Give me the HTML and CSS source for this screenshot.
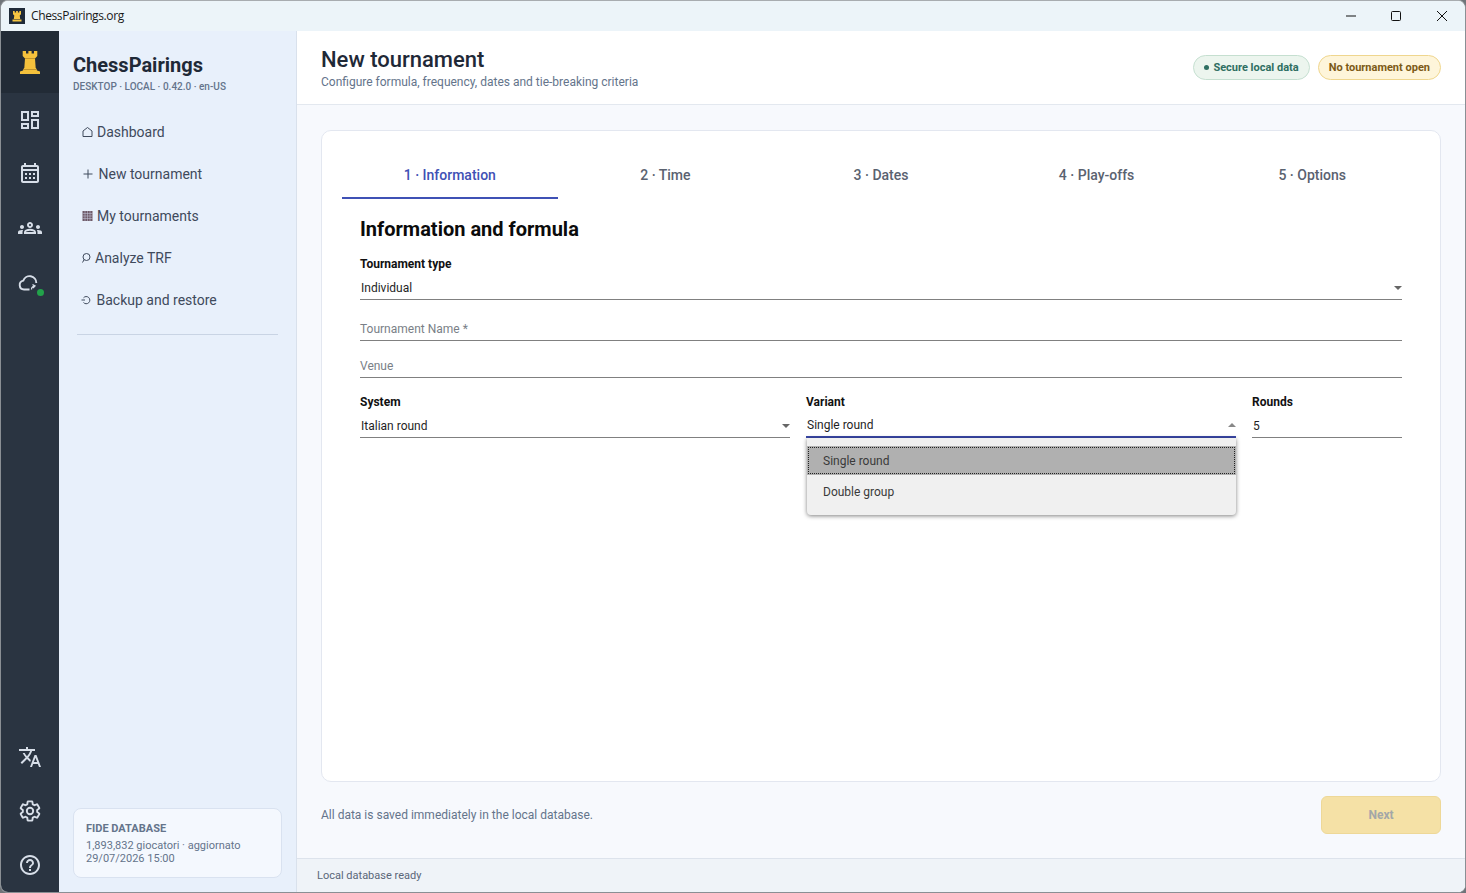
FILE: index.html
```html
<!DOCTYPE html>
<html lang="en">
<head>
<meta charset="utf-8">
<title>ChessPairings.org</title>
<link rel="stylesheet" href="styles.css">
</head>
<body>
<div class="window">
  <header class="titlebar">
    <span class="app-icon"><svg width="16" height="16" viewBox="0 0 16 16"><rect width="16" height="16" fill="#1f2a38"/><path d="M4 3h1.700v1.500h1.400V3h1.800v1.500h1.400V3H12v3.200l-1.300 1.200.5 3.600H4.800l.5-3.600L4 6.200z" fill="#f5c542"/><rect x="3.500" y="11.500" width="9" height="2" fill="#f5c542"/></svg></span>
    <span class="app-name">ChessPairings.org</span>
    <div class="win-controls">
      <svg width="12" height="12" viewBox="0 0 12 12"><path d="M1 6h10" stroke="#111" stroke-width="1" fill="none"/></svg>
      <svg width="12" height="12" viewBox="0 0 12 12"><rect x="1.500" y="1.500" width="9" height="9" rx="1" stroke="#111" stroke-width="1" fill="none"/></svg>
      <svg width="12" height="12" viewBox="0 0 12 12"><path d="M1 1l10 10M11 1L1 11" stroke="#111" stroke-width="1" fill="none"/></svg>
    </div>
  </header>
  <div class="app">
    <nav class="rail">
      <div class="rail-logo">
        <svg width="20" height="23" viewBox="0 0 20 23"><path d="M2.700 0h3.300v2.600h2.400V0h3.200v2.600h2.400V0h3.300v5L15 7.500l.7 9.500H4.300L5 7.500 2.700 5z" fill="#f5c13c"/><path d="M5 7.500h10" stroke="#c2952c" stroke-width="1"/><path d="M4 17h12l1 2.500 3 1V23H0v-2.500l3-1z" fill="#f5c13c"/><path d="M3.500 18.500h13" stroke="#c2952c" stroke-width="1"/></svg>
      </div>
      <div class="rail-top">
        <a class="rail-btn"><svg width="24" height="24" viewBox="0 0 24 24" class="ri"><path d="M19 5v2h-4V5h4M9 5v6H5V5h4m10 8v6h-4v-6h4M9 17v2H5v-2h4M21 3h-8v6h8V3zM11 3H3v10h8V3zm10 8h-8v10h8V11zm-10 4H3v6h8v-6z"/></svg></a>
        <a class="rail-btn"><svg width="24" height="24" viewBox="0 1 24 24" class="ri"><path d="M19 4h-1V2h-2v2H8V2H6v2H5C3.900 4 3 4.900 3 6v14c0 1.100.9 2 2 2h14c1.100 0 2-.9 2-2V6c0-1.100-.9-2-2-2zm0 16H5V10h14V20zM5 8V6h14v2H5z"/><path d="M7 12h2v2H7zM11 12h2v2h-2zM15 12h2v2h-2zM7 16h2v2H7zM11 16h2v2h-2zM15 16h2v2h-2z"/></svg></a>
        <a class="rail-btn"><svg width="24" height="24" viewBox="0 0 24 24" class="ri"><path d="M4 13c1.100 0 2-.9 2-2 0-1.100-.9-2-2-2s-2 .9-2 2c0 1.100.9 2 2 2zm1.130 1.100C4.760 14.040 4.390 14 4 14c-.99 0-1.930.21-2.780.58C.48 14.900 0 15.620 0 16.430V18h4.500v-1.610c0-.83.23-1.610.63-2.290zM20 13c1.100 0 2-.9 2-2 0-1.100-.9-2-2-2s-2 .9-2 2c0 1.100.9 2 2 2zm4 3.430c0-.81-.48-1.530-1.220-1.850C21.930 14.210 20.990 14 20 14c-.39 0-.76.04-1.130.1.400.68.630 1.460.630 2.290V18H24v-1.570zm-7.760-2.780C15.070 13.140 13.630 12.750 12 12.750c-1.630 0-3.070.39-4.240.9C6.680 14.130 6 15.210 6 16.390V18h12v-1.610c0-1.180-.68-2.260-1.760-2.740zM8.070 16c.09-.23.13-.39.91-.69.97-.38 1.990-.56 3.020-.56s2.050.18 3.020.56c.77.3.81.46.91.69H8.070zM12 8c.55 0 1 .45 1 1s-.45 1-1 1-1-.45-1-1 .45-1 1-1m0-2c-1.660 0-3 1.340-3 3s1.340 3 3 3 3-1.340 3-3-1.340-3-3-3z"/></svg></a>
        <a class="rail-btn"><svg width="24" height="24" viewBox="0 -2 24 24" class="rs"><path d="M11.500 17.500H6a4.500 4.500 0 0 1-.7-8.900A6.700 6.700 0 0 1 18.300 11"/><path d="M13.500 17.500a3.500 3.500 0 0 1 3.500-3.500M14.500 12.500l2.500 1.500-2 2" stroke-width="1.300"/></svg><span class="status-dot"></span></a>
      </div>
      <div class="rail-bottom">
        <a class="rail-btn"><svg width="24" height="24" viewBox="0 0 24 24" class="ri"><path d="M12.870 15.070l-2.540-2.510.03-.03c1.740-1.940 2.980-4.170 3.710-6.530H17V4h-7V2H8v2H1v1.990h11.170C11.500 7.920 10.440 9.750 9 11.350 8.070 10.320 7.300 9.190 6.690 8h-2c.73 1.630 1.730 3.170 2.980 4.560l-5.090 5.020L4 19l5-5 3.110 3.110.76-2.040zM18.500 10h-2L12 22h2l1.120-3h4.750L21 22h2l-4.500-12zm-2.620 7l1.620-4.330L19.120 17h-3.240z"/></svg></a>
        <a class="rail-btn"><svg width="24" height="24" viewBox="0 0 24 24" class="rs"><path d="M19.140 12.940c.04-.3.06-.61.06-.94 0-.32-.02-.64-.07-.94l2.030-1.580c.18-.14.23-.41.12-.61l-1.920-3.320c-.12-.22-.37-.29-.59-.22l-2.390.96c-.5-.38-1.030-.7-1.620-.94l-.36-2.540c-.04-.24-.24-.41-.48-.41h-3.840c-.24 0-.43.17-.47.41l-.36 2.540c-.59.24-1.130.57-1.620.94l-2.390-.96c-.22-.08-.47 0-.59.22L2.740 8.870c-.12.21-.08.47.12.61l2.030 1.580c-.05.3-.09.63-.09.94s.02.64.07.94l-2.030 1.580c-.18.14-.23.41-.12.61l1.920 3.320c.12.22.37.29.59.22l2.390-.96c.5.38 1.030.7 1.620.94l.36 2.540c.05.24.24.41.48.41h3.840c.24 0 .44-.17.47-.41l.36-2.540c.59-.24 1.130-.56 1.620-.94l2.390.96c.22.08.47 0 .59-.22l1.920-3.320c.12-.22.07-.47-.12-.61l-2.010-1.580z"/><circle cx="12" cy="12" r="3.200"/></svg></a>
        <a class="rail-btn"><svg width="24" height="24" viewBox="0 0 24 24" class="ri"><path d="M11 18h2v-2h-2v2zm1-16C6.480 2 2 6.480 2 12s4.480 10 10 10 10-4.480 10-10S17.520 2 12 2zm0 18c-4.410 0-8-3.590-8-8s3.590-8 8-8 8 3.590 8 8-3.590 8-8 8zm0-14c-2.210 0-4 1.790-4 4h2c0-1.100.9-2 2-2s2 .9 2 2c0 2-3 1.750-3 5h2c0-2.250 3-2.500 3-5 0-2.210-1.790-4-4-4z"/></svg></a>
      </div>
    </nav>
    <aside class="sidebar">
      <div class="brand">
        <div class="brand-name">ChessPairings</div>
        <div class="brand-meta">DESKTOP · LOCAL · 0.42.0 · en-US</div>
      </div>
      <ul class="menu">
        <li><svg class="mi" width="11" height="12" viewBox="0 0 11 12"><path d="M1 10.500V5l4.500-3.500L10 5v5.500z" fill="none" stroke="#3f4a5c"/></svg>Dashboard</li>
        <li class="menu-new"><svg class="mi" width="10" height="12" viewBox="0 0 10 12"><path d="M5 1.500v9M.5 6h9" fill="none" stroke="#3f4a5c"/></svg>New tournament</li>
        <li><svg class="mi" width="11" height="12" viewBox="0 0 11 12"><rect x=".5" y="1" width="10" height="10" fill="#6e5a68"/><path d="M.5 3.500h10M.5 6h10M.5 8.500h10M3 1v10M5.500 1v10M8 1v10" stroke="#c9cde0" stroke-width=".5"/></svg>My tournaments</li>
        <li class="menu-tight"><svg class="mi" width="10" height="12" viewBox="0 0 10 12"><circle cx="5.500" cy="5" r="3.500" fill="none" stroke="#3f4a5c"/><path d="M3.200 7.500L1.500 10.500" stroke="#3f4a5c" fill="none"/></svg>Analyze TRF</li>
        <li class="menu-backup"><svg class="mi" width="11" height="12" viewBox="0 0 11 12"><path d="M2.500 3.800a3.600 3.600 0 1 1 0 4.700M.5 6h3.500" fill="none" stroke="#3f4a5c"/></svg>Backup and restore</li>
      </ul>
      <div class="menu-rule"></div>
      <div class="fide">
        <div class="fide-title">FIDE DATABASE</div>
        <div class="fide-text">1,893,832 giocatori · aggiornato<br>29/07/2026 15:00</div>
      </div>
    </aside>
    <main class="content">
      <div class="page-head">
        <div>
          <h1>New tournament</h1>
          <p>Configure formula, frequency, dates and tie-breaking criteria</p>
        </div>
        <div class="badges">
          <span class="badge badge-green"><i></i>Secure local data</span>
          <span class="badge badge-yellow">No tournament open</span>
        </div>
      </div>
      <div class="page-body">
        <section class="card">
          <div class="tabs">
            <div class="tab active">1 · Information</div>
            <div class="tab">2 · Time</div>
            <div class="tab">3 · Dates</div>
            <div class="tab">4 · Play-offs</div>
            <div class="tab">5 · Options</div>
          </div>
          <div class="form">
            <h2>Information and formula</h2>
            <div class="field">
              <label>Tournament type</label>
              <div class="control select"><span>Individual</span><b class="caret"></b></div>
            </div>
            <div class="plain">Tournament Name *</div>
            <div class="plain">Venue</div>
            <div class="row">
              <div class="field f-system">
                <label>System</label>
                <div class="control select"><span>Italian round</span><b class="caret"></b></div>
              </div>
              <div class="field f-variant">
                <label>Variant</label>
                <div class="control select open"><span>Single round</span><b class="caret up"></b></div>
                <div class="dropdown">
                  <div class="opt selected">Single round</div>
                  <div class="opt">Double group</div>
                </div>
              </div>
              <div class="field f-rounds">
                <label>Rounds</label>
                <div class="control"><span>5</span></div>
              </div>
            </div>
          </div>
        </section>
        <div class="actions">
          <span class="note">All data is saved immediately in the local database.</span>
          <button class="next" disabled>Next</button>
        </div>
      </div>
      <footer class="status">Local database ready</footer>
    </main>
  </div>
</div>
</body>
</html>
```
FILE: styles.css
```css
* { box-sizing: border-box; }
html, body { margin: 0; padding: 0; height: 100%; background: #6f7479; overflow: hidden; }
body { font-family: Roboto, "Liberation Sans", sans-serif; color: #1f2937; }
.window { width: 1466px; height: 893px; display: flex; flex-direction: column; border: 1px solid #8a8f94; border-top-color: #a8acb0; border-radius: 8px; overflow: hidden; background: #fff; }
.titlebar { height: 30px; flex: none; display: flex; align-items: center; background: #ecf4f9; padding-left: 8px; }
.app-icon { width: 16px; height: 16px; display: block; }
.app-icon svg { display: block; }
.app-name { margin-left: 6px; font-family: "Open Sans", "Noto Sans", sans-serif; font-size: 12px; line-height: 15px; letter-spacing: -.38px; color: #1a1a1a; margin-top: -1px; }
.win-controls { margin-left: auto; display: flex; align-items: center; gap: 33px; padding-right: 17px; }
.win-controls svg { display: block; }
.win-controls svg:last-child { margin-left: 1px; }
.app { flex: 1; display: flex; min-height: 0; }

.rail { width: 58px; flex: none; background: #2a3441; display: flex; flex-direction: column; }
.rail-logo { height: 62px; background: #222b36; display: flex; align-items: center; justify-content: center; flex: none; }
.rail-top { display: flex; flex-direction: column; }
.rail-bottom { margin-top: auto; display: flex; flex-direction: column; }
.rail-btn { height: 54px; display: flex; align-items: center; justify-content: center; position: relative; }
.ri { fill: #d7dee8; display: block; }
.rs { fill: none; stroke: #d7dee8; stroke-width: 1.900; display: block; }
.status-dot { position: absolute; left: 35.500px; top: 33.500px; width: 7px; height: 7px; border-radius: 50%; background: #22a24a; }

.sidebar { width: 238px; flex: none; background: #e8f0fb; border-right: 1px solid #d9e1ec; display: flex; flex-direction: column; padding: 0 14px 14px; }
.brand { padding-top: 22px; height: 80px; flex: none; }
.brand-name { font-size: 20px; line-height: 24px; font-weight: 700; color: #1f2937; }
.brand-meta { font-size: 10px; line-height: 14px; font-weight: 500; color: #64748b; margin-top: 3px; }
.menu { list-style: none; margin: 0; padding: 0 0 0 8px; }
.menu li { height: 42px; display: flex; align-items: center; font-size: 14px; color: #3f4a5c; white-space: nowrap; }
.mi { flex: none; margin-right: 4px; margin-left: 1px; display: block; }
.menu-new .mi { margin-left: 2px; margin-right: 5.500px; }
.menu-tight .mi { margin-left: 0; margin-right: 4px; }
.menu-backup .mi { margin-left: 0; margin-right: 4.500px; }
.menu-rule { margin: 13px 4px 0 4px; height: 1px; background: #c9d4e4; flex: none; }
.fide { margin-top: auto; width: 209px; height: 70px; background: #f4f8fe; border: 1px solid #d9e2f0; border-radius: 8px; padding: 13px 12px 0; flex: none; }
.fide-title { font-size: 11px; line-height: 13px; font-weight: 700; color: #64748b; }
.fide-text { font-size: 11px; line-height: 13px; color: #64748b; margin-top: 4px; }

.content { flex: 1; min-width: 0; display: flex; flex-direction: column; background: #f7f9fd; }
.page-head { height: 74px; flex: none; background: #fff; border-bottom: 1px solid #e3e8ef; display: flex; align-items: flex-start; justify-content: space-between; padding: 16px 24px 0; }
h1 { margin: 0; font-size: 22px; line-height: 26px; font-weight: 500; color: #1f2937; }
.page-head p { margin: 2px 0 0; font-size: 12px; line-height: 15px; color: #64748b; }
.badges { display: flex; gap: 8px; padding-top: 8px; }
.badge { height: 25px; display: flex; align-items: center; border-radius: 13px; font-size: 11px; font-weight: 700; padding: 0 10px; border: 1px solid; }
.badge-green { background: #ecf5ee; border-color: #c5dfd0; color: #2f6f62; }
.badge-green i { width: 5px; height: 5px; border-radius: 50%; background: #2f6f62; margin-right: 4px; }
.badge-yellow { background: #fef5da; border-color: #efd68e; color: #7c5a16; }

.page-body { flex: 1; min-height: 0; display: flex; flex-direction: column; padding: 25px 24px 0; }
.card { height: 652px; flex: none; background: #fff; border: 1px solid #e3e7f0; border-radius: 10px; padding: 0 20px; }
.tabs { display: flex; height: 68px; }
.tab { flex: 1; height: 68px; padding-top: 36px; line-height: 17px; text-align: center; font-size: 14px; font-weight: 500; color: #5a6270; border-bottom: 2px solid transparent; }
.tab.active { color: #4050b5; border-bottom-color: #3f51b5; }
.form { padding: 0 18px; }
h2 { margin: 17px 0 0; font-size: 20px; line-height: 26px; font-weight: 700; color: #0b0b0b; }
.field label { display: block; font-size: 12px; line-height: 15px; font-weight: 700; color: #111; }
.form > .field { margin-top: 15px; }
.control { height: 28px; border-bottom: 1px solid #808080; display: flex; align-items: center; font-size: 12px; color: #1f1f1f; padding: 4px 0 0 1px; justify-content: space-between; }
.plain { height: 41px; border-bottom: 1px solid #808080; display: flex; align-items: flex-end; padding-bottom: 4px; font-size: 12px; color: #7a7f87; }
.plain + .plain { height: 37px; }
.caret { width: 0; height: 0; border-left: 4px solid transparent; border-right: 4px solid transparent; border-top: 4px solid #666; }
.caret.up { border-top: 0; border-bottom: 4px solid #888; }
.row { display: flex; gap: 16px; margin-top: 17px; }
.f-system { width: 430px; flex: none; }
.f-variant { width: 430px; flex: none; position: relative; }
.f-rounds { flex: 1; min-width: 0; }
.control.open { border-bottom: 2px solid #3a48a8; }
.dropdown { position: absolute; left: 1px; right: 0; top: 43px; height: 77px; background: #f0f0f0; border-radius: 0 0 4px 4px; box-shadow: 0 1px 4px rgba(0,0,0,.5); padding-top: 8px; z-index: 5; }
.opt { height: 31px; padding: 0 16px; display: flex; align-items: center; font-size: 12px; color: #3a3a3a; }
.opt.selected { height: 29px; margin-bottom: 1px; background: #b0b0b0; outline: 1px dotted #222; outline-offset: -2px; }

.actions { flex: 1; display: flex; align-items: flex-start; justify-content: space-between; padding-top: 14px; }
.note { font-size: 12px; line-height: 38px; color: #64748b; }
.next { width: 120px; height: 38px; background: #f5e1a6; border: 1px solid #eed898; border-radius: 6px; font-family: inherit; font-size: 12px; font-weight: 700; color: #a3a7a8; }
.status { height: 34px; flex: none; background: #eff3f8; border-top: 1px solid #dde3ec; padding-left: 20px; display: flex; align-items: center; font-size: 11px; color: #5a6678; }
```
